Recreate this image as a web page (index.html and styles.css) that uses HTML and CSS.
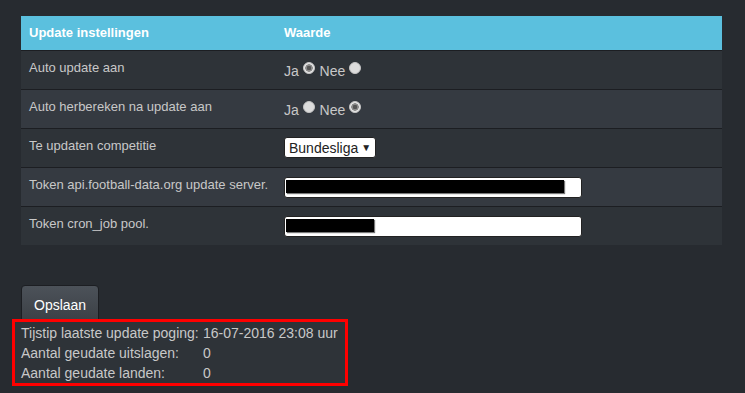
FILE: index.html
```html
<!DOCTYPE html>
<html lang="nl">
<head>
    <meta charset="UTF-8">
    <title>Update instellingen</title>
    <link rel="stylesheet" href="styles.css">
</head>
<body>
    <div class="page">
        <table class="settings">
            <thead>
                <tr>
                    <th class="col-label">Update instellingen</th>
                    <th>Waarde</th>
                </tr>
            </thead>
            <tbody>
                <tr>
                    <td>Auto update aan</td>
                    <td>
                        <div class="choices">
                            Ja <span class="radio checked"></span>
                            Nee <span class="radio"></span>
                        </div>
                    </td>
                </tr>
                <tr>
                    <td>Auto herbereken na update aan</td>
                    <td>
                        <div class="choices">
                            Ja <span class="radio"></span>
                            Nee <span class="radio checked"></span>
                        </div>
                    </td>
                </tr>
                <tr>
                    <td>Te updaten competitie</td>
                    <td>
                        <div class="select">Bundesliga<span class="caret">&#9660;</span></div>
                    </td>
                </tr>
                <tr>
                    <td>Token api.football-data.org update server.</td>
                    <td>
                        <div class="token"><span class="redact" style="width: 278px"></span></div>
                    </td>
                </tr>
                <tr>
                    <td>Token cron_job pool.</td>
                    <td>
                        <div class="token"><span class="redact" style="width: 88px"></span></div>
                    </td>
                </tr>
            </tbody>
        </table>

        <button type="button" class="btn">Opslaan</button>

        <div class="status">
            <table>
                <tr><td class="status-label">Tijstip laatste update poging:</td><td>16-07-2016 23:08 uur</td></tr>
                <tr><td class="status-label">Aantal geudate uitslagen:</td><td>0</td></tr>
                <tr><td class="status-label">Aantal geudate landen:</td><td>0</td></tr>
            </table>
        </div>
    </div>
</body>
</html>
```
FILE: styles.css
```css
body {
    margin: 0;
    background-color: #272b30;
    color: #c8c8c8;
    font-family: "Liberation Sans", Arial, sans-serif;
    font-size: 13px;
}

.page {
    padding: 16px 23px 0 21px;
}

.settings {
    width: 701px;
    border-collapse: collapse;
    table-layout: fixed;
}

.settings thead tr {
    height: 34px;
}

.settings tbody tr {
    height: 39px;
}

.settings th {
    background-color: #5bc0de;
    color: #fff;
    font-weight: bold;
    text-align: left;
    vertical-align: top;
    padding: 7px 8px 0;
    line-height: 20px;
}

.settings .col-label {
    width: 239px;
}

.settings td {
    border-top: 1px solid #1c1e22;
    padding: 0 8px;
    line-height: 20px;
    vertical-align: top;
    background-color: #2e3338;
}

.settings tbody tr:nth-child(even) td {
    background-color: #353a41;
}

.settings td:first-child {
    padding-top: 7px;
    white-space: nowrap;
}

.choices {
    padding-top: 10px;
    font-size: 14px;
    line-height: 20px;
}

.radio {
    display: inline-block;
    width: 12px;
    height: 12px;
    border-radius: 50%;
    background: #dcdcdc;
    border: 1px solid #c4c4c4;
    vertical-align: 2px;
    margin: 0 1px 0 0;
    box-sizing: border-box;
}

.radio.checked {
    background: radial-gradient(circle, #555 0 2px, #8a8a8a 2.5px 3.5px, #e6e6e6 4px);
}

.select {
    display: inline-block;
    margin-top: 8px;
    height: 21px;
    box-sizing: border-box;
    white-space: nowrap;
    background: #fff;
    color: #222;
    border: 1px solid #222;
    border-radius: 3px;
    font-size: 14px;
    line-height: 19px;
    padding: 0 4px 0 4px;
}

.caret {
    font-size: 10px;
    vertical-align: 2px;
    margin-left: 3px;
}

.token {
    margin-top: 9px;
    width: 298px;
    height: 21px;
    box-sizing: border-box;
    background: #fff;
    border: 1px solid #222;
    border-radius: 3px;
    padding: 2px 1px;
}

.redact {
    display: block;
    height: 13px;
    background: #000;
    box-shadow: 1px 1px 1px #777;
}

.btn {
    display: block;
    margin-top: 40px;
    height: 40px;
    padding: 0 12px;
    font-family: "Liberation Sans", Arial, sans-serif;
    font-size: 14px;
    color: #fff;
    background: linear-gradient(#4c5259, #3a3f44);
    border: 1px solid #1c1e22;
    border-radius: 4px;
}

.status {
    position: relative;
    width: 324px;
    margin: -6px 0 0 -9px;
    padding: 1px 0 0 6px;
    border: 3px solid #ff0000;
    background: #2e3338;
    font-size: 14px;
}

.status table {
    border-collapse: collapse;
}

.status td {
    padding: 0;
    line-height: 20px;
}

.status-label {
    width: 182px;
}
```
